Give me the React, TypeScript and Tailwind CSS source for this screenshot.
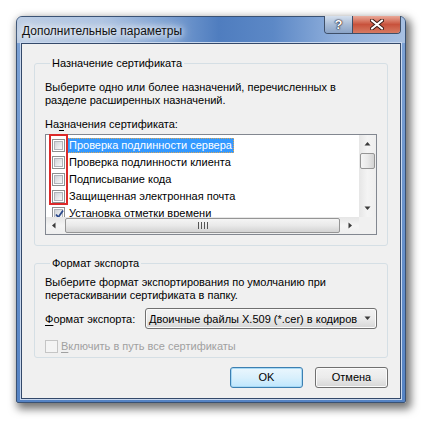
import type { ReactNode } from 'react';

const FONT = "font-['Liberation_Sans','Noto_Sans',sans-serif]";

function Check({ checked = false, disabled = false }: { checked?: boolean; disabled?: boolean }) {
  if (disabled) {
    return <span className="h-[13px] w-[13px] shrink-0 border border-[#c5c5c5] bg-[#f4f4f4]" />;
  }
  return (
    <span className="relative flex h-[13px] w-[13px] shrink-0 items-center justify-center border border-[#8e8f8f] bg-white">
      <span className="h-[9px] w-[9px] border border-[#b0b4ba] bg-gradient-to-br from-[#cfd3d8] to-[#f8f8f8]" />
      {checked && (
        <svg className="absolute left-[1px] top-[1px]" width="11" height="11" viewBox="0 0 11 11">
          <path d="M2 5.5 L4.3 8.2 L9 1.6" fill="none" stroke="#2b4a8c" strokeWidth="1.8" />
        </svg>
      )}
    </span>
  );
}

function Arrow({ dir }: { dir: 'up' | 'down' | 'left' | 'right' }) {
  const d = {
    up: 'M0.5 4.5 L3.5 1 L6.5 4.5 Z',
    down: 'M0.5 1.5 L3.5 5 L6.5 1.5 Z',
    left: 'M4.5 0.5 L1 3.5 L4.5 6.5 Z',
    right: 'M1.5 0.5 L5 3.5 L1.5 6.5 Z',
  }[dir];
  return (
    <svg width="7" height="7" viewBox="0 0 7 7">
      <path d={d} fill="#3b3b3b" />
    </svg>
  );
}

function Item({ label, checked, selected }: { label: string; checked?: boolean; selected?: boolean }) {
  return (
    <div className="flex h-[17px] shrink-0 items-center gap-[2px] pl-[6px] whitespace-nowrap">
      <Check checked={checked} />
      <span
        className={
          selected
            ? 'bg-[#3399ff] px-[2px] leading-[15px] text-white outline outline-1 -outline-offset-1 outline-dotted outline-[#d7a65a]'
            : 'px-[2px] leading-[15px]'
        }
      >
        {label}
      </span>
    </div>
  );
}

function Btn({ children, primary }: { children: ReactNode; primary?: boolean }) {
  return (
    <button
      className={
        primary
          ? 'flex h-[21px] w-[73px] items-center justify-center rounded-[3px] border border-[#3c7fb1] bg-gradient-to-b from-[#eaf6fd] via-[#d9f0fc] to-[#bee6fd] shadow-[inset_0_0_0_1px_#a7d9f5]'
          : 'flex h-[21px] w-[73px] items-center justify-center rounded-[3px] border border-[#707070] bg-gradient-to-b from-[#f2f2f2] via-[#ebebeb] to-[#d6d6d6] shadow-[inset_0_0_0_1px_#fbfbfb]'
      }
    >
      {children}
    </button>
  );
}

export default function App() {
  return (
    <div className={`min-h-screen bg-white pl-4 pt-4 text-[11px] text-black ${FONT}`}>
      <div className="flex h-[387px] w-[390px] flex-col rounded-t-[6px] rounded-b-[2px] border border-[#3a5274] bg-gradient-to-b from-[#7ea3d6] to-[#5583c4] shadow-[3px_4px_8px_2px_rgba(0,0,0,0.55)]">
        {/* title bar */}
        <div className="flex h-[26px] shrink-0 items-start rounded-t-[5px] bg-[linear-gradient(90deg,#bccde4_0%,#aec4e2_22%,#7ea2d3_38%,#4f7dbf_52%,#5c88c6_66%,#8eaedb_82%,#a7c0e2_100%)]">
          <span className="ml-[5px] mt-[6px] whitespace-nowrap text-[12px] leading-[16px] text-[#111] [text-shadow:0_0_6px_#fff,0_0_10px_#fff,0_0_14px_#fff]">
            Дополнительные параметры
          </span>
          <div className="ml-auto mr-[4px] -mt-px flex h-[18px] overflow-hidden rounded-b-[4px] border border-t-0 border-[#3e4f68]">
            <div className="flex w-[28px] items-center justify-center border-r border-[#3e4f68] bg-gradient-to-b from-[#d5e0ee] via-[#a9bcd6] to-[#8aa3c6]">
              <span className="text-[13px] font-bold leading-none text-white [text-shadow:0_0_1px_#223,0_0_1px_#223,0_0_2px_#223]">
                ?
              </span>
            </div>
            <div className="flex w-[47px] items-center justify-center bg-gradient-to-b from-[#e9a999] via-[#c8523c] to-[#d67a62]">
              <svg width="14" height="11" viewBox="0 0 14 11">
                <path d="M2 1.5 L12 9.5 M12 1.5 L2 9.5" stroke="#3a1a14" strokeWidth="4" strokeLinecap="round" />
                <path d="M2 1.5 L12 9.5 M12 1.5 L2 9.5" stroke="#fff" strokeWidth="2.2" strokeLinecap="round" />
              </svg>
            </div>
          </div>
        </div>

        {/* client */}
        <div className="mx-[4px] mb-[3px] flex min-h-0 flex-1 flex-col border border-[#34496a] bg-[#f0f0f0] px-[12px] pt-[12px] shadow-[0_0_0_1px_#c9d8ee]">
          <fieldset className="min-w-0 rounded-[3px] border border-[#d5dfe5] px-[10px] pb-[10px]">
            <legend className="ml-[5px] px-[2px] leading-[14px]">Назначение сертификата</legend>
            <p className="whitespace-nowrap pt-[11px] leading-[13px]">
              Выберите одно или более назначений, перечисленных в<br />
              разделе расширенных назначений.
            </p>
            <div className="mt-[10px] leading-[14px]">
              На<u className="underline-offset-2">з</u>начения сертификата:
            </div>
            <div className="relative mt-[3px] flex h-[101px] flex-col border border-[#828790] bg-white">
              <div className="flex h-[82px]">
                <div className="flex min-w-0 flex-1 flex-col overflow-hidden pt-[2px]">
                  <Item label="Проверка подлинности сервера" selected />
                  <Item label="Проверка подлинности клиента" />
                  <Item label="Подписывание кода" />
                  <Item label="Защищенная электронная почта" />
                  <Item label="Установка отметки времени" checked />
                </div>
                <div className="flex w-[17px] flex-col bg-gradient-to-r from-[#e6e6e6] via-[#f4f4f4] to-[#eeeeee]">
                  <div className="flex h-[17px] items-center justify-center pt-[2px]">
                    <Arrow dir="up" />
                  </div>
                  <div className="mx-[1px] mt-px h-[16px] rounded-[2px] border border-[#959595] bg-gradient-to-r from-[#f5f5f5] via-[#e9e9e9] to-[#d3d3d3]" />
                  <div className="flex-1" />
                  <div className="flex h-[17px] items-center justify-center">
                    <Arrow dir="down" />
                  </div>
                </div>
              </div>
              <div className="flex h-[17px]">
                <div className="flex flex-1 items-center bg-gradient-to-b from-[#e6e6e6] via-[#f4f4f4] to-[#eeeeee]">
                  <div className="flex w-[17px] justify-center">
                    <Arrow dir="left" />
                  </div>
                  <div className="mx-[2px] flex h-[15px] flex-1 items-center justify-center rounded-[2px] border border-[#959595] bg-gradient-to-b from-[#f5f5f5] via-[#e9e9e9] to-[#d3d3d3]">
                    <div className="flex gap-[2px]">
                      <span className="h-[7px] w-px bg-[#555]" />
                      <span className="h-[7px] w-px bg-[#555]" />
                      <span className="h-[7px] w-px bg-[#555]" />
                      <span className="h-[7px] w-px bg-[#555]" />
                    </div>
                  </div>
                  <div className="flex w-[17px] justify-center">
                    <Arrow dir="right" />
                  </div>
                </div>
                <div className="w-[17px] bg-[#f0f0f0]" />
              </div>
              <div className="absolute -top-px left-[3px] h-[71px] w-[19px] border-2 border-[#dc2a2a]" />
            </div>
          </fieldset>

          <fieldset className="mt-[10px] min-w-0 rounded-[3px] border border-[#d5dfe5] px-[10px] pb-[4px]">
            <legend className="ml-[5px] px-[2px] leading-[14px]">Формат экспорта</legend>
            <p className="whitespace-nowrap pt-[6px] leading-[13px]">
              Выберите формат экспортирования по умолчанию при<br />
              перетаскивании сертификата в папку.
            </p>
            <div className="mt-[6px] flex items-center">
              <span className="w-[100px] shrink-0 whitespace-nowrap leading-[14px]">
                <u className="underline-offset-2">Ф</u>ормат экспорта:
              </span>
              <div className="flex h-[21px] min-w-0 flex-1 items-center rounded-[3px] border border-[#707070] bg-gradient-to-b from-[#f2f2f2] via-[#ebebeb] to-[#d6d6d6] shadow-[inset_0_0_0_1px_#fbfbfb]">
                <span className="min-w-0 flex-1 overflow-hidden whitespace-nowrap pl-[3px] leading-[14px]">
                  Двоичные файлы X.509 (*.cer) в кодиров
                </span>
                <span className="flex w-[17px] shrink-0 justify-center">
                  <Arrow dir="down" />
                </span>
              </div>
            </div>
            <div className="mt-[10px] flex items-center gap-[3px] leading-[14px] text-[#a0a0a0]">
              <Check disabled />
              <span className="whitespace-nowrap">
                <u className="underline-offset-2">В</u>ключить в путь все сертификаты
              </span>
            </div>
          </fieldset>

          <div className="mt-[9px] flex justify-end gap-[12px]">
            <Btn primary>OK</Btn>
            <Btn>Отмена</Btn>
          </div>
        </div>
      </div>
    </div>
  );
}
